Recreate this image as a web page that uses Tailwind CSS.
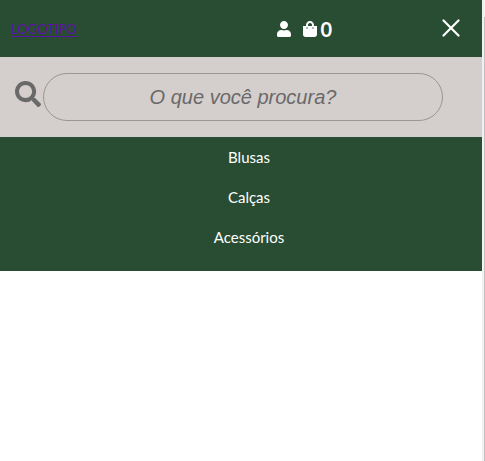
<!DOCTYPE html>
<html lang="pt-BR">
<head>
<meta charset="utf-8">
<meta name="viewport" content="width=device-width, initial-scale=1">
<title>Loja</title>
<script src="https://cdn.jsdelivr.net/npm/@tailwindcss/browser@4"></script>
</head>
<body class="flex min-h-screen bg-white font-['Lato',sans-serif] text-white">
<div class="min-w-0 grow">
  <header class="flex h-[57px] items-center bg-[#294d33] pl-[11px] pr-[22px]">
    <div class="flex flex-1">
      <a href="#" class="text-[13px] leading-5 text-[#5d12a5] underline underline-offset-2">LOGOTIPO</a>
    </div>
    <div class="flex items-center gap-3">
      <a href="#" aria-label="Minha conta">
        <svg class="h-4 w-[14px]" viewBox="0 0 448 512" fill="currentColor"><path d="M224 256c70.700 0 128-57.300 128-128S294.700 0 224 0 96 57.300 96 128s57.300 128 128 128zm89.600 32h-16.700c-22.200 10.200-46.900 16-72.900 16s-50.600-5.800-72.900-16h-16.700C60.200 288 0 348.200 0 422.400V464c0 26.500 21.500 48 48 48h352c26.500 0 48-21.500 48-48v-41.600c0-74.200-60.200-134.400-134.400-134.400z"/></svg>
      </a>
      <a href="#" aria-label="Sacola, 0 itens" class="flex items-center gap-[3px] text-xl leading-6 font-bold">
        <svg class="h-4 w-[14px]" viewBox="0 0 448 512" fill="currentColor"><path d="M352 160v-32C352 57.400 294.600 0 224 0S96 57.400 96 128v32H0v272c0 44.200 35.800 80 80 80h288c44.200 0 80-35.800 80-80V160h-96zm-192-32c0-35.300 28.700-64 64-64s64 28.700 64 64v32H160v-32zm160 120c-13.300 0-24-10.700-24-24s10.700-24 24-24 24 10.700 24 24-10.700 24-24 24zm-192 0c-13.300 0-24-10.700-24-24s10.700-24 24-24 24 10.700 24 24-10.700 24-24 24z"/></svg>
        <span>0</span>
      </a>
    </div>
    <div class="flex w-32 justify-end pb-[2px]">
      <button type="button" aria-label="Fechar menu">
        <svg class="size-[18px]" viewBox="0 0 18 18" fill="none" stroke="currentColor" stroke-width="2.200" stroke-linecap="round"><path d="M1.500 1.500l15 15M16.500 1.500l-15 15"/></svg>
      </button>
    </div>
  </header>
  <form class="flex h-20 items-center bg-[#d4cecd] pl-[15px] pr-[39px]">
    <button type="button" aria-label="Buscar" class="mr-[2px] pb-[6px] text-[#696969]">
      <svg class="size-[26px]" viewBox="0 0 512 512" fill="currentColor"><path d="M505 442.700L405.300 343c-4.500-4.500-10.600-7-17-7H372c27.600-35.300 44-79.700 44-128C416 93.100 322.900 0 208 0S0 93.100 0 208s93.100 208 208 208c48.300 0 92.700-16.400 128-44v16.300c0 6.400 2.500 12.500 7 17l99.700 99.700c9.400 9.400 24.600 9.400 33.900 0l28.300-28.300c9.400-9.400 9.400-24.600.1-34zM208 336c-70.700 0-128-57.200-128-128 0-70.700 57.200-128 128-128 70.700 0 128 57.200 128 128 0 70.700-57.200 128-128 128z"/></svg>
    </button>
    <input type="text" aria-label="O que você procura?" placeholder="O que você procura?" class="h-12 min-w-0 grow rounded-full border border-[#9b9595] text-center font-['Liberation_Sans',sans-serif] text-xl text-[#696969] italic placeholder:text-[#696969]">
  </form>
  <nav class="bg-[#294d33] pt-2 pb-[22px] pl-4">
    <ul class="flex flex-col gap-4 text-center text-[15px] leading-6">
      <li><a href="#">Blusas</a></li>
      <li><a href="#">Calças</a></li>
      <li><a href="#">Acessórios</a></li>
    </ul>
  </nav>
</div>
<div class="flex w-[3px] justify-end bg-[#f1f1f1] pt-[17px]" aria-hidden="true"><div class="w-px bg-[#c1c1c1]"></div></div>
</body>
</html>
